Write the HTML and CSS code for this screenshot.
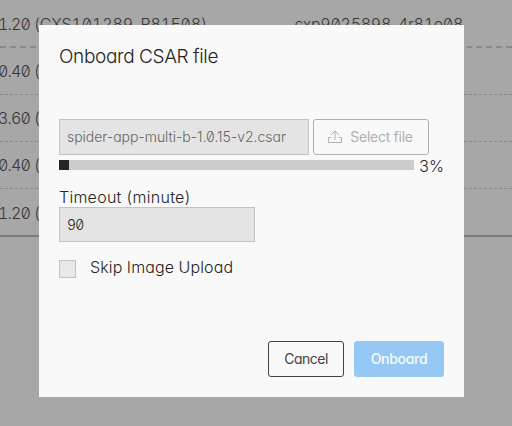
FILE: index.html
```html
<!DOCTYPE html>
<html lang="en">
<head>
<meta charset="utf-8">
<title>Onboard CSAR file</title>
<link rel="stylesheet" href="styles.css">
</head>
<body>
<div class="packages">
  <div class="row header"><span>1.20 <span class="revision">(CXS101289_R81E08)</span></span><span class="product">cxp9025898_4r81e08</span></div>
  <div class="row"><span>0.40 (</span></div>
  <div class="row"><span>3.60 (</span></div>
  <div class="row"><span>0.40 (</span></div>
  <div class="row last"><span>1.20 (</span></div>
</div>
<div class="dialog" role="dialog">
  <h1 class="title"><span>Onboard CSAR file</span></h1>
  <div class="file">
    <div class="field filename"><span>spider-app-multi-b-1.0.15-v2.csar</span></div>
    <button class="btn select" disabled>
      <svg class="upload" viewBox="0 0 16 16" width="16" height="16" fill="none" stroke="currentColor"><path d="M4.5 8.5H1.5V13.5H14.5V8.5H11.5M8 11V2M4.2 5.8L8 2L11.8 5.8"/></svg>
      <span>Select file</span>
    </button>
  </div>
  <div class="progress">
    <div class="track"><div class="fill"></div></div>
    <span class="percent">3%</span>
  </div>
  <label class="label"><span>Timeout (minute)</span></label>
  <div class="field timeout"><span>90</span></div>
  <div class="option"><span class="checkbox"></span><span class="option-text">Skip Image Upload</span></div>
  <div class="actions">
    <button class="btn cancel"><span>Cancel</span></button>
    <button class="btn onboard"><span>Onboard</span></button>
  </div>
</div>
</body>
</html>
```
FILE: styles.css
```css
* { box-sizing: border-box; }
body {
  margin: 0;
  height: 426px;
  overflow: hidden;
  background: #a7a7a7;
  color: #242424;
  font-family: Inter, "Noto Sans", sans-serif;
  font-feature-settings: "zero", "cv11", "tnum";
  font-size: 16px;
}
.row {
  display: flex;
  align-items: center;
  height: 47px;
  border-bottom: 1px dashed #8a8a8a;
  color: #383838;
  font-weight: 300;
  letter-spacing: -0.8px;
  text-indent: -2px;
  white-space: nowrap;
}
.row.header { height: 48px; padding-top: 1px; border-bottom: 2px dashed #8a8a8a; }
.row.last { height: 48px; border-bottom: 2px solid #7b7b7b; padding-top: 2px; }
.revision { letter-spacing: -0.12px; }
.product { margin-left: auto; margin-right: 49px; letter-spacing: -0.25px; }
.dialog {
  position: absolute;
  left: 39px;
  top: 25px;
  width: 425px;
  height: 372px;
  padding: 20px;
  display: flex;
  flex-direction: column;
  background: #f9f9f9;
}
.title { margin: 0; height: 74px; font-size: 19px; line-height: 24px; font-weight: 300; letter-spacing: -0.35px; }
.file { display: flex; gap: 4px; }
.field {
  display: flex;
  align-items: center;
  padding: 0 7px;
  border: 1px solid #c3c3c3;
  background: #e4e4e4;
  font-size: 14px;
  font-weight: 300;
  white-space: nowrap;
}
.filename { width: 250px; height: 36px; padding-bottom: 1px; color: #666; font-feature-settings: "zero", "cv11"; letter-spacing: -0.02px; }
.btn {
  display: flex;
  align-items: center;
  justify-content: center;
  height: 36px;
  padding: 0;
  border: 1px solid #424242;
  border-radius: 3px;
  background: none;
  color: #424242;
  font: inherit;
  font-feature-settings: inherit;
  font-size: 14px;
  white-space: nowrap;
}
.select { width: 116px; gap: 7px; padding: 0 2px 1px 0; border-color: #b0b0b0; color: #b0b0b0; letter-spacing: -0.25px; }
.progress { display: flex; align-items: center; gap: 5px; height: 20px; }
.track { width: 355px; height: 10px; background: #ccc; }
.fill { width: 10px; height: 10px; background: #242424; }
.percent { padding-top: 2px; font-weight: 300; letter-spacing: -0.3px; }
.label { height: 32px; padding-top: 12px; line-height: 20px; font-weight: 300; letter-spacing: 0.25px; }
.timeout { width: 196px; height: 35px; letter-spacing: -0.7px; }
.option { display: flex; align-items: center; height: 20px; margin-top: 16px; }
.checkbox { width: 17px; height: 18px; margin-top: 2px; border: 1px solid #c3c3c3; background: #e8e8e8; }
.option-text { margin: -2px 0 0 14px; font-weight: 300; letter-spacing: 0.12px; }
.actions { display: flex; justify-content: flex-end; gap: 10px; margin-top: auto; }
.cancel { width: 76px; padding-bottom: 1px; letter-spacing: -0.5px; }
.onboard { width: 90px; padding-bottom: 1px; border-color: #95c8f5; background: #95c8f5; color: #fafafa; font-weight: 500; letter-spacing: -0.3px; }
```
